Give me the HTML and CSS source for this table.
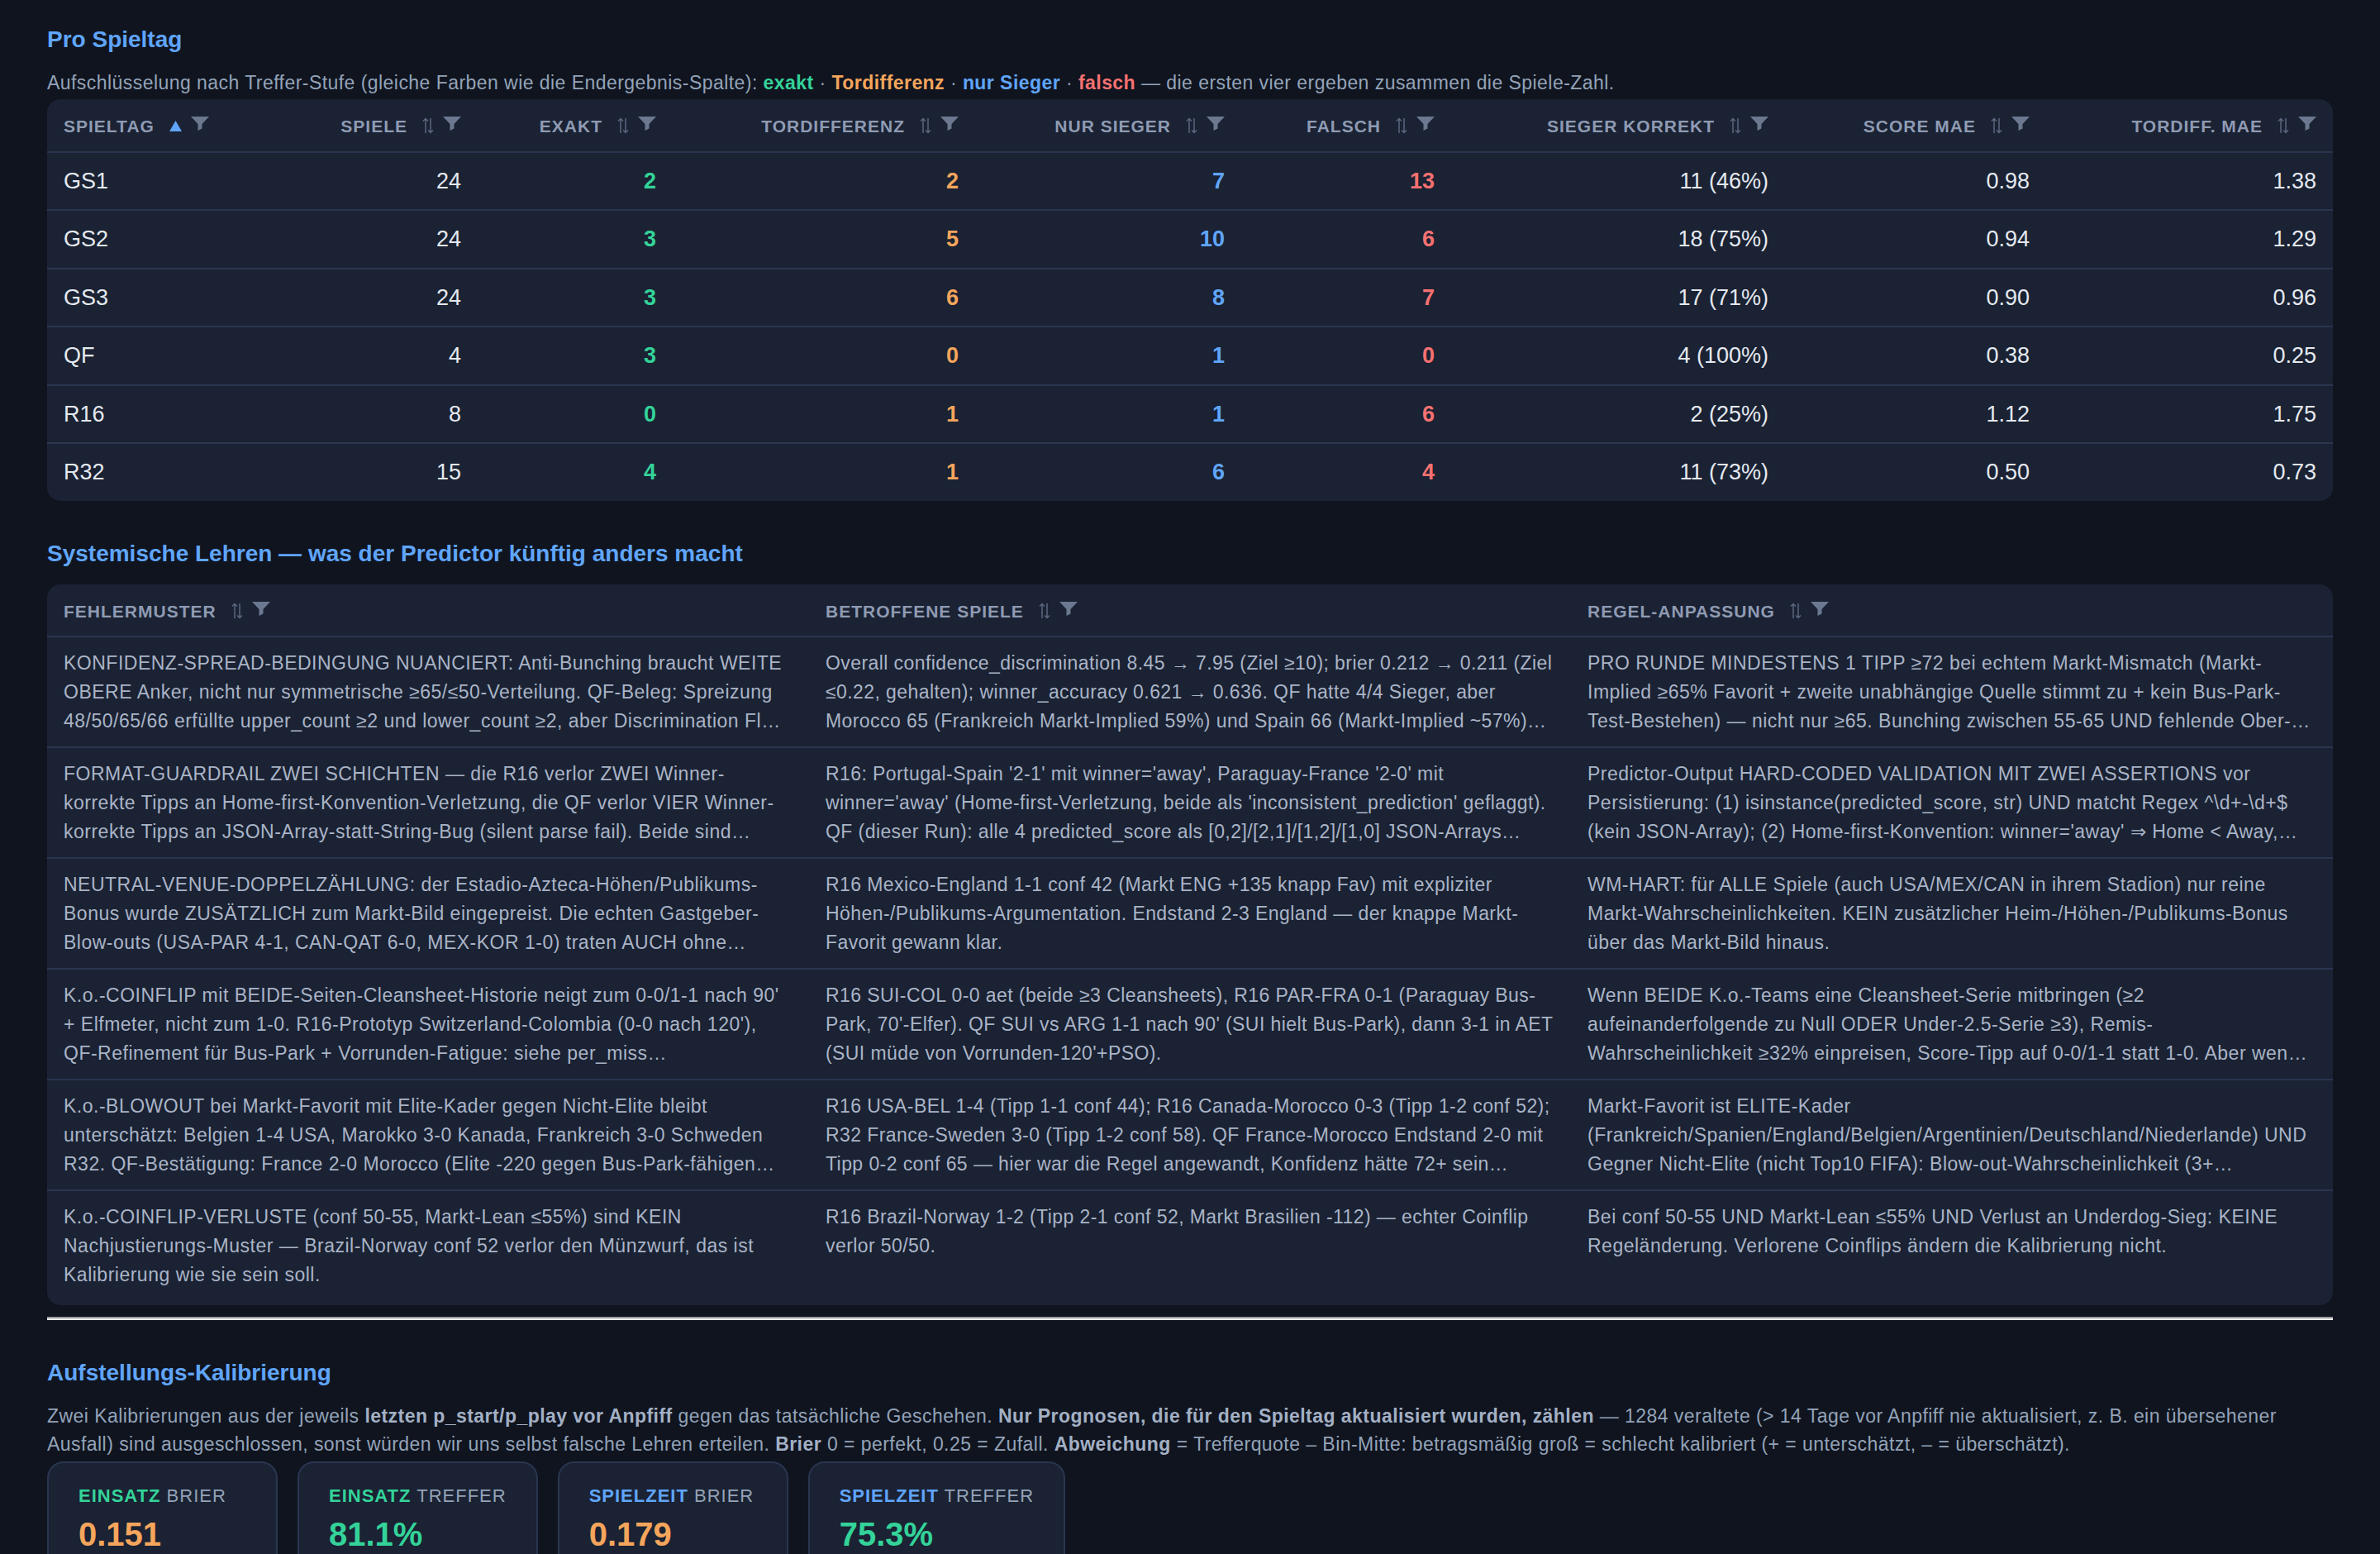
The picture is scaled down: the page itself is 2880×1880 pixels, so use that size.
FILE: index.html
```html
<!DOCTYPE html>
<html lang="de">
<head>
<meta charset="utf-8">
<title>Spieltag-Auswertung</title>
<link rel="stylesheet" href="styles.css">
</head>
<body>
<main class="page">

  <section class="sec sec-first">
    <h2 class="section-title">Pro Spieltag</h2>
    <p class="lead">Aufschlüsselung nach Treffer-Stufe (gleiche Farben wie die Endergebnis-Spalte): <b class="c-green">exakt</b> · <b class="c-orange">Tordifferenz</b> · <b class="c-blue">nur Sieger</b> · <b class="c-red">falsch</b> — die ersten vier ergeben zusammen die Spiele-Zahl.</p>
    <div class="card">
      <table class="data">
        <colgroup>
          <col class="w260"><col class="w261"><col class="w236"><col class="w366"><col class="w322"><col class="w254"><col class="w404"><col class="w316"><col class="w347">
        </colgroup>
        <thead>
          <tr>
            <th><span class="th-in">Spieltag
              <svg class="ic-active" viewBox="0 0 15 13" width="15" height="13"><path d="M7.5 0L15 13H0z"/></svg>
              <svg class="ic-filter" viewBox="0 0 22 17" width="22" height="17"><path d="M0 0h22l-8.5 9v5.5L8.5 17V9z"/></svg></span></th>
            <th class="num"><span class="th-in">Spiele
              <svg class="ic-sort" viewBox="0 0 14 20" width="14" height="20"><path d="M4 19V1.5M1 4.5l3-3 3 3M10 1v17.5M7 15.5l3 3 3-3"/></svg>
              <svg class="ic-filter" viewBox="0 0 22 17" width="22" height="17"><path d="M0 0h22l-8.5 9v5.5L8.5 17V9z"/></svg></span></th>
            <th class="num"><span class="th-in">Exakt
              <svg class="ic-sort" viewBox="0 0 14 20" width="14" height="20"><path d="M4 19V1.5M1 4.5l3-3 3 3M10 1v17.5M7 15.5l3 3 3-3"/></svg>
              <svg class="ic-filter" viewBox="0 0 22 17" width="22" height="17"><path d="M0 0h22l-8.5 9v5.5L8.5 17V9z"/></svg></span></th>
            <th class="num"><span class="th-in">Tordifferenz
              <svg class="ic-sort" viewBox="0 0 14 20" width="14" height="20"><path d="M4 19V1.5M1 4.5l3-3 3 3M10 1v17.5M7 15.5l3 3 3-3"/></svg>
              <svg class="ic-filter" viewBox="0 0 22 17" width="22" height="17"><path d="M0 0h22l-8.5 9v5.5L8.5 17V9z"/></svg></span></th>
            <th class="num"><span class="th-in">Nur Sieger
              <svg class="ic-sort" viewBox="0 0 14 20" width="14" height="20"><path d="M4 19V1.5M1 4.5l3-3 3 3M10 1v17.5M7 15.5l3 3 3-3"/></svg>
              <svg class="ic-filter" viewBox="0 0 22 17" width="22" height="17"><path d="M0 0h22l-8.5 9v5.5L8.5 17V9z"/></svg></span></th>
            <th class="num"><span class="th-in">Falsch
              <svg class="ic-sort" viewBox="0 0 14 20" width="14" height="20"><path d="M4 19V1.5M1 4.5l3-3 3 3M10 1v17.5M7 15.5l3 3 3-3"/></svg>
              <svg class="ic-filter" viewBox="0 0 22 17" width="22" height="17"><path d="M0 0h22l-8.5 9v5.5L8.5 17V9z"/></svg></span></th>
            <th class="num"><span class="th-in">Sieger korrekt
              <svg class="ic-sort" viewBox="0 0 14 20" width="14" height="20"><path d="M4 19V1.5M1 4.5l3-3 3 3M10 1v17.5M7 15.5l3 3 3-3"/></svg>
              <svg class="ic-filter" viewBox="0 0 22 17" width="22" height="17"><path d="M0 0h22l-8.5 9v5.5L8.5 17V9z"/></svg></span></th>
            <th class="num"><span class="th-in">Score MAE
              <svg class="ic-sort" viewBox="0 0 14 20" width="14" height="20"><path d="M4 19V1.5M1 4.5l3-3 3 3M10 1v17.5M7 15.5l3 3 3-3"/></svg>
              <svg class="ic-filter" viewBox="0 0 22 17" width="22" height="17"><path d="M0 0h22l-8.5 9v5.5L8.5 17V9z"/></svg></span></th>
            <th class="num"><span class="th-in">Tordiff. MAE
              <svg class="ic-sort" viewBox="0 0 14 20" width="14" height="20"><path d="M4 19V1.5M1 4.5l3-3 3 3M10 1v17.5M7 15.5l3 3 3-3"/></svg>
              <svg class="ic-filter" viewBox="0 0 22 17" width="22" height="17"><path d="M0 0h22l-8.5 9v5.5L8.5 17V9z"/></svg></span></th>
          </tr>
        </thead>
        <tbody>
          <tr><td>GS1</td><td class="num">24</td><td class="num c-green">2</td><td class="num c-orange">2</td><td class="num c-blue">7</td><td class="num c-red">13</td><td class="num">11 (46%)</td><td class="num">0.98</td><td class="num">1.38</td></tr>
          <tr><td>GS2</td><td class="num">24</td><td class="num c-green">3</td><td class="num c-orange">5</td><td class="num c-blue">10</td><td class="num c-red">6</td><td class="num">18 (75%)</td><td class="num">0.94</td><td class="num">1.29</td></tr>
          <tr><td>GS3</td><td class="num">24</td><td class="num c-green">3</td><td class="num c-orange">6</td><td class="num c-blue">8</td><td class="num c-red">7</td><td class="num">17 (71%)</td><td class="num">0.90</td><td class="num">0.96</td></tr>
          <tr><td>QF</td><td class="num">4</td><td class="num c-green">3</td><td class="num c-orange">0</td><td class="num c-blue">1</td><td class="num c-red">0</td><td class="num">4 (100%)</td><td class="num">0.38</td><td class="num">0.25</td></tr>
          <tr><td>R16</td><td class="num">8</td><td class="num c-green">0</td><td class="num c-orange">1</td><td class="num c-blue">1</td><td class="num c-red">6</td><td class="num">2 (25%)</td><td class="num">1.12</td><td class="num">1.75</td></tr>
          <tr><td>R32</td><td class="num">15</td><td class="num c-green">4</td><td class="num c-orange">1</td><td class="num c-blue">6</td><td class="num c-red">4</td><td class="num">11 (73%)</td><td class="num">0.50</td><td class="num">0.73</td></tr>
        </tbody>
      </table>
    </div>
  </section>

  <section class="sec">
    <h2 class="section-title">Systemische Lehren — was der Predictor künftig anders macht</h2>
    <div class="card card-lessons">
      <table class="lessons">
        <colgroup><col class="third"><col class="third"><col class="third"></colgroup>
        <thead>
          <tr>
            <th><span class="th-in">Fehlermuster
              <svg class="ic-sort" viewBox="0 0 14 20" width="14" height="20"><path d="M4 19V1.5M1 4.5l3-3 3 3M10 1v17.5M7 15.5l3 3 3-3"/></svg>
              <svg class="ic-filter" viewBox="0 0 22 17" width="22" height="17"><path d="M0 0h22l-8.5 9v5.5L8.5 17V9z"/></svg></span></th>
            <th><span class="th-in">Betroffene Spiele
              <svg class="ic-sort" viewBox="0 0 14 20" width="14" height="20"><path d="M4 19V1.5M1 4.5l3-3 3 3M10 1v17.5M7 15.5l3 3 3-3"/></svg>
              <svg class="ic-filter" viewBox="0 0 22 17" width="22" height="17"><path d="M0 0h22l-8.5 9v5.5L8.5 17V9z"/></svg></span></th>
            <th><span class="th-in">Regel-Anpassung
              <svg class="ic-sort" viewBox="0 0 14 20" width="14" height="20"><path d="M4 19V1.5M1 4.5l3-3 3 3M10 1v17.5M7 15.5l3 3 3-3"/></svg>
              <svg class="ic-filter" viewBox="0 0 22 17" width="22" height="17"><path d="M0 0h22l-8.5 9v5.5L8.5 17V9z"/></svg></span></th>
          </tr>
        </thead>
        <tbody>
          <tr>
            <td><div class="clamp">KONFIDENZ-SPREAD-BEDINGUNG NUANCIERT: Anti-Bunching braucht WEITE OBERE Anker, nicht nur symmetrische ≥65/≤50-Verteilung. QF-Beleg: Spreizung 48/50/65/66 erfüllte upper_count ≥2 und lower_count ≥2, aber Discrimination Fl…</div></td>
            <td><div class="clamp">Overall confidence_discrimination 8.45 → 7.95 (Ziel ≥10); brier 0.212 → 0.211 (Ziel ≤0.22, gehalten); winner_accuracy 0.621 → 0.636. QF hatte 4/4 Sieger, aber Morocco 65 (Frankreich Markt-Implied 59%) und Spain 66 (Markt-Implied ~57%)…</div></td>
            <td><div class="clamp">PRO RUNDE MINDESTENS 1 TIPP ≥72 bei echtem Markt-Mismatch (Markt-Implied ≥65% Favorit + zweite unabhängige Quelle stimmt zu + kein Bus-Park-Test-Bestehen) — nicht nur ≥65. Bunching zwischen 55-65 UND fehlende Ober-…</div></td>
          </tr>
          <tr>
            <td><div class="clamp">FORMAT-GUARDRAIL ZWEI SCHICHTEN — die R16 verlor ZWEI Winner-korrekte Tipps an Home-first-Konvention-Verletzung, die QF verlor VIER Winner-korrekte Tipps an JSON-Array-statt-String-Bug (silent parse fail). Beide sind…</div></td>
            <td><div class="clamp">R16: Portugal-Spain '2-1' mit winner='away', Paraguay-France '2-0' mit winner='away' (Home-first-Verletzung, beide als 'inconsistent_prediction' geflaggt). QF (dieser Run): alle 4 predicted_score als [0,2]/[2,1]/[1,2]/[1,0] JSON-Arrays…</div></td>
            <td><div class="clamp">Predictor-Output HARD-CODED VALIDATION MIT ZWEI ASSERTIONS vor Persistierung: (1) isinstance(predicted_score, str) UND matcht Regex ^\d+-\d+$ (kein JSON-Array); (2) Home-first-Konvention: winner='away' ⇒ Home &lt; Away,…</div></td>
          </tr>
          <tr>
            <td><div class="clamp">NEUTRAL-VENUE-DOPPELZÄHLUNG: der Estadio-Azteca-Höhen/Publikums-Bonus wurde ZUSÄTZLICH zum Markt-Bild eingepreist. Die echten Gastgeber-Blow-outs (USA-PAR 4-1, CAN-QAT 6-0, MEX-KOR 1-0) traten AUCH ohne…</div></td>
            <td><div class="clamp">R16 Mexico-England 1-1 conf 42 (Markt ENG +135 knapp Fav) mit expliziter Höhen-/Publikums-Argumentation. Endstand 2-3 England — der knappe Markt-Favorit gewann klar.</div></td>
            <td><div class="clamp">WM-HART: für ALLE Spiele (auch USA/MEX/CAN in ihrem Stadion) nur reine Markt-Wahrscheinlichkeiten. KEIN zusätzlicher Heim-/Höhen-/Publikums-Bonus über das Markt-Bild hinaus.</div></td>
          </tr>
          <tr>
            <td><div class="clamp">K.o.-COINFLIP mit BEIDE-Seiten-Cleansheet-Historie neigt zum 0-0/1-1 nach 90' + Elfmeter, nicht zum 1-0. R16-Prototyp Switzerland-Colombia (0-0 nach 120'), QF-Refinement für Bus-Park + Vorrunden-Fatigue: siehe per_miss…</div></td>
            <td><div class="clamp">R16 SUI-COL 0-0 aet (beide ≥3 Cleansheets), R16 PAR-FRA 0-1 (Paraguay Bus-Park, 70'-Elfer). QF SUI vs ARG 1-1 nach 90' (SUI hielt Bus-Park), dann 3-1 in AET (SUI müde von Vorrunden-120'+PSO).</div></td>
            <td><div class="clamp">Wenn BEIDE K.o.-Teams eine Cleansheet-Serie mitbringen (≥2 aufeinanderfolgende zu Null ODER Under-2.5-Serie ≥3), Remis-Wahrscheinlichkeit ≥32% einpreisen, Score-Tipp auf 0-0/1-1 statt 1-0. Aber wen…</div></td>
          </tr>
          <tr>
            <td><div class="clamp">K.o.-BLOWOUT bei Markt-Favorit mit Elite-Kader gegen Nicht-Elite bleibt unterschätzt: Belgien 1-4 USA, Marokko 3-0 Kanada, Frankreich 3-0 Schweden R32. QF-Bestätigung: France 2-0 Morocco (Elite -220 gegen Bus-Park-fähigen…</div></td>
            <td><div class="clamp">R16 USA-BEL 1-4 (Tipp 1-1 conf 44); R16 Canada-Morocco 0-3 (Tipp 1-2 conf 52); R32 France-Sweden 3-0 (Tipp 1-2 conf 58). QF France-Morocco Endstand 2-0 mit Tipp 0-2 conf 65 — hier war die Regel angewandt, Konfidenz hätte 72+ sein…</div></td>
            <td><div class="clamp">Markt-Favorit ist ELITE-Kader (Frankreich/Spanien/England/Belgien/Argentinien/Deutschland/Niederlande) UND Gegner Nicht-Elite (nicht Top10 FIFA): Blow-out-Wahrscheinlichkeit (3+…</div></td>
          </tr>
          <tr>
            <td><div class="clamp">K.o.-COINFLIP-VERLUSTE (conf 50-55, Markt-Lean ≤55%) sind KEIN Nachjustierungs-Muster — Brazil-Norway conf 52 verlor den Münzwurf, das ist Kalibrierung wie sie sein soll.</div></td>
            <td><div class="clamp">R16 Brazil-Norway 1-2 (Tipp 2-1 conf 52, Markt Brasilien -112) — echter Coinflip verlor 50/50.</div></td>
            <td><div class="clamp">Bei conf 50-55 UND Markt-Lean ≤55% UND Verlust an Underdog-Sieg: KEINE Regeländerung. Verlorene Coinflips ändern die Kalibrierung nicht.</div></td>
          </tr>
        </tbody>
      </table>
    </div>
  </section>

  <hr class="rule">

  <section class="sec sec-calib">
    <h2 class="section-title">Aufstellungs-Kalibrierung</h2>
    <p class="lead lead-calib">Zwei Kalibrierungen aus der jeweils <strong>letzten p_start/p_play vor Anpfiff</strong> gegen das tatsächliche Geschehen. <strong>Nur Prognosen, die für den Spieltag aktualisiert wurden, zählen</strong> — 1284 veraltete (&gt; 14 Tage vor Anpfiff nie aktualisiert, z. B. ein übersehener Ausfall) sind ausgeschlossen, sonst würden wir uns selbst falsche Lehren erteilen. <strong>Brier</strong> 0 = perfekt, 0.25 = Zufall. <strong>Abweichung</strong> = Trefferquote – Bin-Mitte: betragsmäßig groß = schlecht kalibriert (+ = unterschätzt, – = überschätzt).</p>
    <div class="stats">
      <div class="stat">
        <div class="stat-label"><b class="c-green">Einsatz</b> Brier</div>
        <div class="stat-value c-orange">0.151</div>
      </div>
      <div class="stat">
        <div class="stat-label"><b class="c-green">Einsatz</b> Treffer</div>
        <div class="stat-value c-green">81.1%</div>
      </div>
      <div class="stat">
        <div class="stat-label"><b class="c-blue">Spielzeit</b> Brier</div>
        <div class="stat-value c-orange">0.179</div>
      </div>
      <div class="stat">
        <div class="stat-label"><b class="c-blue">Spielzeit</b> Treffer</div>
        <div class="stat-value c-green">75.3%</div>
      </div>
    </div>
  </section>

</main>
</body>
</html>
```

FILE: styles.css
```css
* { box-sizing: border-box; }

html { scrollbar-width: none; }
html::-webkit-scrollbar { display: none; }

body {
  margin: 0;
  background: #0f141f;
  font-family: "Liberation Sans", Arial, Helvetica, sans-serif;
  color: #94a3b8;
}

.page {
  padding: 31px 57px 40px;
}

.sec { margin-top: 47px; }
.sec-first { margin-top: 0; }

.section-title {
  margin: 0;
  font-size: 28px;
  line-height: 34px;
  font-weight: 700;
  color: #60a5fa;
}

.lead {
  margin: 18px 0 3px;
  font-size: 23px;
  line-height: 34px;
  letter-spacing: 0.45px;
  color: #94a3b8;
}
.lead strong { font-weight: 700; color: #a3b0c4; }

.c-green { color: #34d399; }
.c-orange { color: #f5a55c; }
.c-blue { color: #60a5fa; }
.c-red { color: #f87171; }

.card {
  background: #1a2233;
  border-radius: 16px;
  overflow: hidden;
}
.card-lessons { margin-top: 20px; }

/* header cells shared */
.th-in {
  display: inline-flex;
  align-items: center;
  vertical-align: middle;
}
.ic-sort {
  margin-left: 18px;
  fill: none;
  stroke: #5b6780;
  stroke-width: 1.5;
}
.ic-active {
  margin-left: 18px;
  fill: #60a5fa;
}
.ic-filter {
  margin-left: 11px;
  margin-bottom: 6px;
  fill: #6b7890;
}

/* per-matchday table */
.data {
  width: 100%;
  table-layout: fixed;
  border-collapse: separate;
  border-spacing: 0;
}
.w260 { width: 260px; }
.w261 { width: 261px; }
.w236 { width: 236px; }
.w366 { width: 366px; }
.w322 { width: 322px; }
.w254 { width: 254px; }
.w404 { width: 404px; }
.w316 { width: 316px; }
.w347 { width: 347px; }

.data th,
.lessons th {
  padding: 18px 20px;
  font-size: 21px;
  line-height: 25px;
  font-weight: 700;
  letter-spacing: 1px;
  text-transform: uppercase;
  text-align: left;
  white-space: nowrap;
  color: #8f9bb3;
  border-bottom: 2px solid #2a3550;
}
.data th.num { text-align: right; }

.data td {
  padding: 19px 20px 19.5px;
  font-size: 27px;
  line-height: 30px;
  color: #e5e9f0;
  border-bottom: 2px solid #2a3550;
}
.data td.num { text-align: right; }
.data td.c-green,
.data td.c-orange,
.data td.c-blue,
.data td.c-red { font-weight: 700; }
.data td.c-green { color: #34d399; }
.data td.c-orange { color: #f5a55c; }
.data td.c-blue { color: #60a5fa; }
.data td.c-red { color: #f87171; }
.data tbody tr:last-child td { border-bottom: 0; }

/* lessons table */
.lessons {
  width: 100%;
  table-layout: fixed;
  border-collapse: separate;
  border-spacing: 0;
}
.third { width: 33.333%; }
.lessons th { padding: 18px 20px 17px; }
.lessons td {
  padding: 14px 20px 13px;
  vertical-align: top;
  font-size: 23px;
  line-height: 35px;
  letter-spacing: 0.5px;
  color: #aab4c7;
  border-bottom: 2px solid #2a3550;
}
.lessons td:nth-child(2) { letter-spacing: 0.42px; }
.lessons tbody tr:last-child td {
  border-bottom: 0;
  padding-bottom: 19px;
}
.clamp {
  display: -webkit-box;
  -webkit-box-orient: vertical;
  -webkit-line-clamp: 3;
  overflow: hidden;
}

/* divider */
.rule {
  margin: 14px 0 0;
  height: 0;
  border: 0;
  border-top: 2px solid #9a9b9e;
  border-bottom: 2px solid #ececec;
}

/* calibration */
.lead-calib { margin: 18px 0 4px; }

.stats {
  display: flex;
  gap: 24px;
}
.stat {
  min-width: 279px;
  padding: 27px 36px;
  background: #1a2233;
  border: 2px solid #2a3550;
  border-radius: 20px;
}
.stat-label {
  font-size: 22px;
  line-height: 26px;
  letter-spacing: 1px;
  text-transform: uppercase;
  color: #94a3b8;
  white-space: nowrap;
}
.stat-value {
  margin-top: 11px;
  font-size: 40px;
  line-height: 44px;
  font-weight: 700;
}
```
